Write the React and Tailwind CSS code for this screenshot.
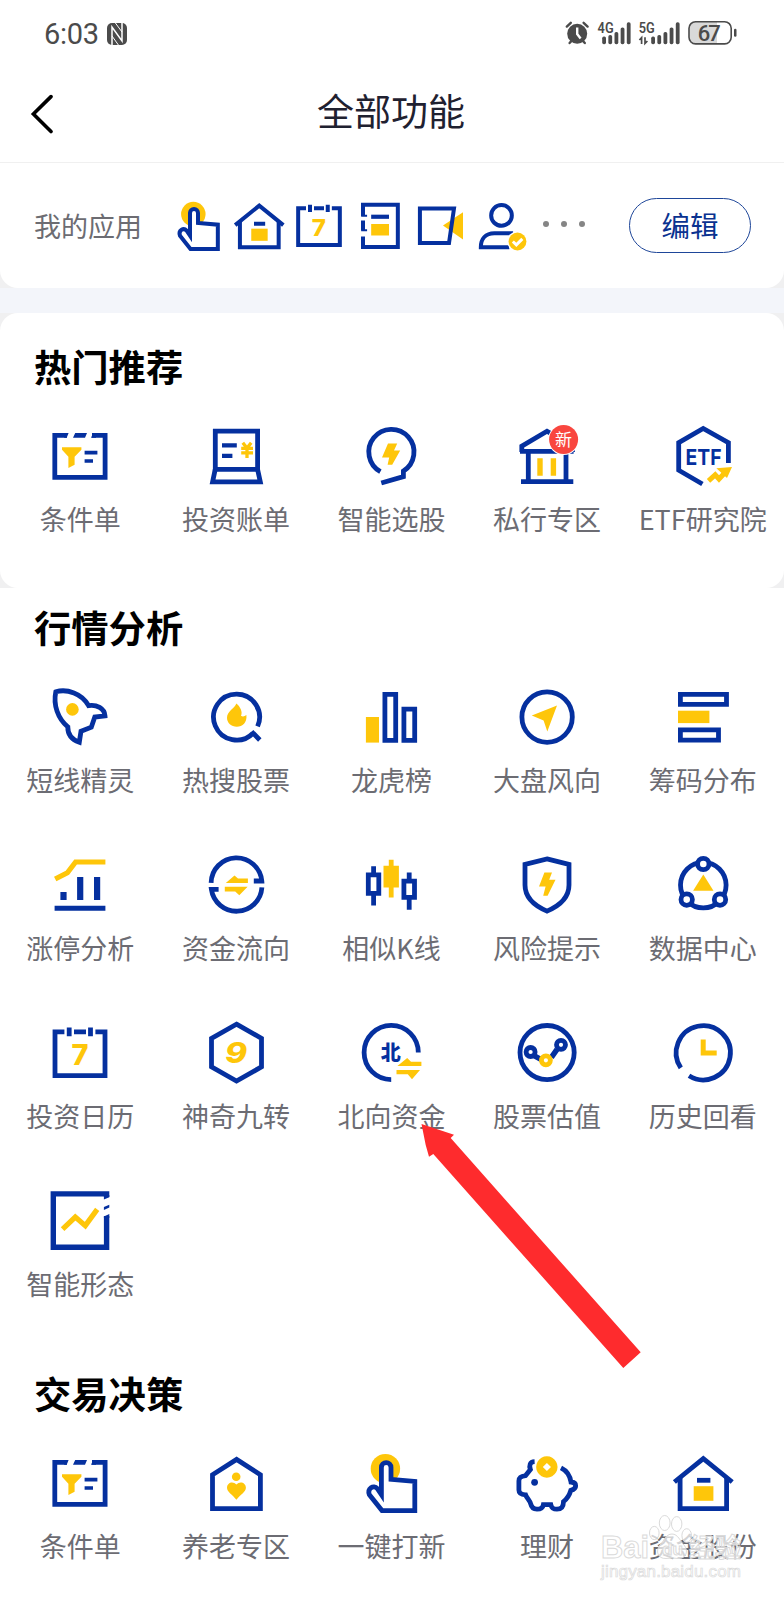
const BLUE = '#05309f';
const GOLD = '#fec60a';

/* ---------- ícones: todos em uma área de 72x72 ---------- */

function Icon({ small, children }) {
  return (
    <svg
      viewBox="0 0 72 72"
      className={small ? 'block h-[60px] w-[60px]' : 'block h-[72px] w-[72px]'}
      fill="none"
      stroke={BLUE}
      strokeWidth="4.8"
    >
      {children}
    </svg>
  );
}

const Gold = ({ d }) => <path d={d} fill={GOLD} stroke="none" />;
const Blue = ({ d }) => <path d={d} fill={BLUE} stroke="none" />;

const icons = {
  condition: (
    <>
      <path d="M23 15.4H10.8V57.4H61.1V15.4H48" />
      <Blue d="M22 13H24.6L22.7 17.8H20ZM31.2 13H43L41 17.8H29ZM49.2 13H52V17.8H47Z" />
      <Gold d="M18 27.2H37.4V29.8L30.6 36.8V44.8L24.4 47.9V36.8L18 29.8Z" />
      <path d="M40.6 32.6H53.4M40.6 41H49" strokeWidth="3.7" />
    </>
  ),
  bill: (
    <>
      <path d="M15.3 49.4V11.2H57.6V49.4Z" />
      <path d="M15.2 49.4L12.6 61.8H60.3L57.6 49.4" />
      <path d="M22 25.4H36.8M22 35.8H32.4" strokeWidth="4.3" />
      <path d="M42.8 22.8L47 28L51.2 22.8M41.2 28.4H53M41.2 32.8H53M47 28V38" stroke={GOLD} strokeWidth="3.3" />
    </>
  ),
  smartPick: (
    <>
      <path d="M25.4 51.7A22.6 22.6 0 1 1 48.4 51.1V56.6L26.3 63" />
      <Gold d="M33 23.4H42.2L39 30.4H45.2L37.2 44.8H32.6L34.2 37.4H27Z" />
    </>
  ),
  bank: (
    <>
      <path d="M9 31.4H62.6M10.8 32V26.2L36 11.2L61.5 26.2V32" />
      <path d="M17.3 31V61.7M55 31V61.7M10 61.7H62.3" />
      <path d="M29 38.3V55.7M42.4 38.3V55.7" stroke={GOLD} strokeWidth="5.4" />
      <circle cx="52.6" cy="19.6" r="15.4" fill="#fff" stroke="none" />
      <circle cx="52.6" cy="19.6" r="14.5" fill="#f9463f" stroke="none" />
      <text
        x="52.6"
        y="26"
        textAnchor="middle"
        fontSize="17"
        fill="#fff"
        stroke="none"
        className="font-['Noto_Sans_CJK_SC',sans-serif]"
      >
        新
      </text>
    </>
  ),
  etf: (
    <>
      <path d="M61.4 43V22.6L36.2 8.4L11.7 22.6V50.2L35.4 64" />
      <text
        x="18.6"
        y="44.6"
        fontSize="22"
        textLength="36"
        lengthAdjust="spacingAndGlyphs"
        fill={BLUE}
        stroke="none"
        className="font-['Inter',sans-serif] font-bold"
      >
        ETF
      </text>
      <path d="M41.5 60.8L48.2 54.8L52 59L59.5 51" stroke={GOLD} strokeWidth="5" />
      <Gold d="M49.4 48.2L65 47L60 58Z" />
    </>
  ),
  rocket: (
    <>
      <path d="M11.8 10.8C23 7.5 38 12.5 44.6 24.6C52.5 23.2 60.5 27.5 61 34.8L50.8 36L47.3 46.2L37 50.2L35.3 61.2C27.5 58.5 23.6 53.5 23.8 45.8C14 38 9 24 11.8 10.8Z" />
      <circle cx="28.4" cy="28.4" r="6.3" fill={GOLD} stroke="none" />
    </>
  ),
  hotSearch: (
    <>
      <path d="M57.6 45.4A23 23 0 1 0 53 52.2M51.6 50.6L59.8 59" />
      <Gold d="M36.4 22.6C34.5 27.5 27 30.5 27 36.8C27 42 31.4 45.8 36.8 45.8C42.6 45.8 47.2 41.5 46.4 34C44.5 35.6 42.6 36 41 34.8C43 31 40 25.5 36.4 22.6Z" />
    </>
  ),
  ranking: (
    <>
      <Gold d="M10.9 36H24V61.6H10.9Z" />
      <path d="M29.9 13.4H40.7V59.3H29.9ZM48.9 28.1H59.7V59.3H48.9Z" />
    </>
  ),
  compass: (
    <>
      <circle cx="36.1" cy="36.1" r="25.2" />
      <Gold d="M20.8 34.6L46 24.6L36.3 50.6L32.6 39.6Z" />
    </>
  ),
  chips: (
    <>
      <path d="M13.4 13.4H59.5V23.4H13.4ZM13.4 48.8H51.5V59.2H13.4Z" />
      <Gold d="M11 29.7H42.4V42.1H11Z" />
    </>
  ),
  limitUp: (
    <>
      <path d="M10.6 59.2H61.4" strokeWidth="5" />
      <path d="M19.5 43V51M36.2 28V51M53.1 28V51" strokeWidth="6.2" />
      <path d="M11.2 30L23.4 23.8L31.6 13H61.4" stroke={GOLD} strokeWidth="5.2" />
    </>
  ),
  flow: (
    <>
      <path d="M11.1 33.9A25.4 25.4 0 0 1 61.8 32H53.8" />
      <path d="M61.9 38.4A25.4 25.4 0 0 1 11.4 40.4H18.6" />
      <Gold d="M25.8 34L34.5 26.4L38 29.5H47.9V34ZM24.8 37.7H47.6L39.3 46.2L35.2 42.4H24.8Z" />
    </>
  ),
  candles: (
    <>
      <path d="M13.3 25.8H23.8V44.3H13.3ZM18.6 17.3V25M18.6 45V56.5" />
      <path d="M48.9 32.1H59.5V48.3H48.9ZM54.2 23.4V31M54.2 49V60.8" />
      <Gold d="M28.5 16.7H33.8V10.7H38.6V16.7H43.9V38.4H38.6V48.4H33.8V38.4H28.5Z" />
    </>
  ),
  shield: (
    <>
      <path d="M36 9.9L58 15.4V36C58 49 48 57 36 62.1C24 57 14 49 14 36V15.4Z" />
      <Gold d="M33.4 23.4H41L38.2 30.7H44.5L36.6 46.7H32.2L34.6 37.6H28Z" />
    </>
  ),
  dataCenter: (
    <>
      <circle cx="36.3" cy="36.1" r="22.8" />
      <g fill="#fff">
        <circle cx="36.3" cy="15" r="5.7" />
        <circle cx="19.7" cy="50.6" r="5.7" />
        <circle cx="53" cy="50.6" r="5.7" />
      </g>
      <Gold d="M36.3 25.6L46.5 41.8H26.1Z" />
    </>
  ),
  calendar: (
    <>
      <path d="M20.4 14.8H11V58.7H61V14.8H51.4M30 14.8H42M25.2 10.4V19.3M46.5 10.4V19.3" />
      <text
        x="27.4"
        y="48"
        fontSize="28"
        textLength="17"
        lengthAdjust="spacingAndGlyphs"
        fill={GOLD}
        stroke="none"
        className="font-['Inter',sans-serif] font-extrabold"
      >
        7
      </text>
    </>
  ),
  nine: (
    <>
      <path d="M36.5 7.2L61.5 21.3V49.9L36.5 64L11.5 49.9V21.3Z" />
      <text
        x="25"
        y="45.6"
        fontSize="28.5"
        textLength="22"
        lengthAdjust="spacingAndGlyphs"
        fill={GOLD}
        stroke="none"
        className="font-['Inter',sans-serif] font-extrabold italic"
      >
        9
      </text>
    </>
  ),
  north: (
    <>
      <path d="M36.2 62.6A27.1 27.1 0 1 1 63.3 35.6" />
      <text
        x="35.8"
        y="42.8"
        textAnchor="middle"
        fontSize="20"
        fill={BLUE}
        stroke="none"
        className="font-['Noto_Sans_CJK_SC',sans-serif] font-black"
      >
        北
      </text>
      <Gold d="M42.4 49L52.2 41L56 44.7H66.4V49ZM41.5 53H65L57 62.2L52.8 57.3H41.5Z" />
    </>
  ),
  valuation: (
    <>
      <circle cx="36.1" cy="35.6" r="27.1" />
      <path d="M23.5 38.8L30 42.5M40.4 40.4L46 32.4" strokeWidth="5.4" />
      <circle cx="19.6" cy="35" r="4.5" fill="#fff" />
      <circle cx="50" cy="27.8" r="4.5" fill="#fff" />
      <circle cx="34.9" cy="43.3" r="4.5" fill="#fff" stroke={GOLD} />
    </>
  ),
  history: (
    <>
      <path d="M13.8 50.9A27.1 27.1 0 1 1 22 58.8" />
      <path d="M36.2 22.4V36.1H49.7" stroke={GOLD} strokeWidth="5" />
    </>
  ),
  pattern: (
    <>
      <path d="M62.6 12V8.9H9.3V62.3H62.6V31" strokeWidth="5.4" />
      <Blue d="M59.9 10H65.3V12.2L59.9 14.6ZM59.9 22L65.3 19.8V22.6L59.9 24.9ZM59.9 31.4L65.3 29V33H59.9Z" />
      <path d="M18.6 44.2L31.3 32L41.3 40.6L53.2 24.4" stroke={GOLD} strokeWidth="5.2" />
    </>
  ),
  pension: (
    <>
      <path d="M12.5 61.6V27.8L36.6 12.4L60.4 27.8V61.6Z" />
      <circle cx="36.2" cy="29.8" r="4.3" fill={GOLD} stroke="none" />
      <Gold d="M36.4 37.6C33 33.6 27 35.6 27 40.8C27 45 32.5 47.6 36.4 52.8C40.3 47.6 45.9 45 45.9 40.8C45.9 35.6 39.8 33.6 36.4 37.6Z" />
    </>
  ),
  tap: (
    <>
      <circle cx="30.4" cy="21.7" r="14.7" fill={GOLD} stroke="none" />
      <path
        d="M26.4 47.6V20.4A4.8 4.8 0 0 1 36 20.4V32.4L59.8 34.4V63.6H27L14.4 47.8C12 41.5 18.5 37.4 22.4 41.6Z"
        fill="#fff"
      />
    </>
  ),
  piggy: (
    <>
      <path d="M23.6 14.6C18.8 14.8 18 18.5 19.4 22.6L14.6 28.6C9.5 29.4 7.9 30.5 7.9 34V43C7.9 46.4 10.5 47.6 14.6 47.8C15.8 51 18.8 53.4 19.6 56.6C20.4 60.5 22.5 62.2 26 62.2C30 62.2 31.8 61 32.4 57.6H39.8C40.6 61 42 62.2 46 62.2C50.5 62.2 52.4 60 52.5 54.6C56.5 51.5 58.5 48 59.8 43.4C66.5 41.5 66 35.5 60 35C59 28.5 55.5 23.5 50 20.8" />
      <circle cx="23.6" cy="35.3" r="3.4" fill={BLUE} stroke="none" />
      <Gold d="M35.9 9.3A10.7 10.7 0 1 1 35.8 9.3ZM35.9 15.9L31.8 20L35.9 24.1L40 20Z" />
    </>
  ),
  house: (
    <>
      <path d="M7.4 35L36.3 11.6L65.2 35" />
      <path d="M13.1 31V61.6H59.6V31" />
      <path d="M30 33.3H43.4" />
      <Gold d="M26.7 39.2H46.4V53.8H26.7Z" />
    </>
  ),
  notebook: (
    <>
      <path d="M15.6 24V10.4H57.4V61.3H15.6V48.5M15.6 29.5V41" />
      <path d="M13.4 23.6H20.5M13.4 41H20.5" strokeWidth="2.4" />
      <path d="M25.4 24.9H46.8" strokeWidth="5" />
      <Gold d="M25.4 33.6H46.8V47.4H25.4Z" />
    </>
  ),
  camera: (
    <>
      <Gold d="M39.6 35.4L63.6 19.6V52.2Z" />
      <path d="M11.9 14.9H52.8L46.8 56.5H11.9Z" />
    </>
  ),
  account: (
    <>
      <circle cx="36.6" cy="23.3" r="12.4" />
      <path d="M50.5 44.7H28C17.5 44.7 11.8 51.5 11.8 61.4H46" />
      <circle cx="55.8" cy="54.6" r="12.4" fill="#fff" stroke="none" />
      <circle cx="55.8" cy="54.6" r="10.7" fill={GOLD} stroke="none" />
      <path d="M50.2 54.6L54.4 58.6L61.6 51.4" stroke="#fff" strokeWidth="3.6" />
    </>
  ),
};

/* ---------- dados ---------- */

const myApps = ['tap', 'house', 'calendar', 'notebook', 'camera', 'account'];

const hotItems = [
  ['condition', '条件单'],
  ['bill', '投资账单'],
  ['smartPick', '智能选股'],
  ['bank', '私行专区'],
  ['etf', 'ETF研究院'],
];

const marketItems = [
  ['rocket', '短线精灵'],
  ['hotSearch', '热搜股票'],
  ['ranking', '龙虎榜'],
  ['compass', '大盘风向'],
  ['chips', '筹码分布'],
  ['limitUp', '涨停分析'],
  ['flow', '资金流向'],
  ['candles', '相似K线'],
  ['shield', '风险提示'],
  ['dataCenter', '数据中心'],
  ['calendar', '投资日历'],
  ['nine', '神奇九转'],
  ['north', '北向资金'],
  ['valuation', '股票估值'],
  ['history', '历史回看'],
  ['pattern', '智能形态'],
];

const tradeItems = [
  ['condition', '条件单'],
  ['pension', '养老专区'],
  ['tap', '一键打新'],
  ['piggy', '理财'],
  ['house', '资金股份'],
];

function StatusBar() {
  const tops = [36.6, 35, 32, 27.4, 22.2];
  return (
    <div className="flex h-[61px] items-start justify-between pt-[14px] pr-[46px] pl-[44px] text-[#4b4b4b]">
      <div className="flex items-center">
        <span className="w-[63px] pt-[2px] font-['Roboto',sans-serif] text-[29px] leading-[37px] tracking-[-0.3px]">
          6:03
        </span>
        <svg viewBox="0 0 20 22" className="h-[22px] w-[20px]">
          <rect x="0" y="0" width="20" height="22" rx="5" fill="currentColor" />
          <path d="M5 22V4L15 18V0" fill="none" stroke="#fff" strokeWidth="1.5" />
          <path d="M8.4 0L15 9M5 13L11.4 22" stroke="#fff" strokeWidth="1" />
        </svg>
      </div>
      <svg viewBox="565 14 173 39" className="h-[39px] w-[173px]" fill="currentColor">
        <circle cx="577.2" cy="33.8" r="10" />
        <path
          d="M566.8 26.6L570.8 22.8M587.6 26.6L583.6 22.8M569.6 43L572 40.4M584.8 43L582.4 40.4"
          stroke="currentColor"
          strokeWidth="2.4"
          strokeLinecap="round"
        />
        <path d="M577.2 27.5V34L580.6 38.4" fill="none" stroke="#fff" strokeWidth="2.4" />
        <g className="font-['Roboto',sans-serif] font-semibold" fontSize="14.5">
          <text x="597.6" y="33" textLength="16" lengthAdjust="spacingAndGlyphs">4G</text>
          <text x="638.8" y="33" textLength="16" lengthAdjust="spacingAndGlyphs">5G</text>
        </g>
        {tops.map((top, i) => (
          <g key={top}>
            <rect x={602.2 + i * 6.15} y={top} width="3.8" height={44.2 - top} rx="1.7" />
            <rect x={651.2 + i * 6.15} y={top} width="3.8" height={44.2 - top} rx="1.7" />
          </g>
        ))}
        <path
          d="M639.4 40L641.6 37.6V44M645 37.2V43.4L647.4 41"
          fill="none"
          stroke="currentColor"
          strokeWidth="1.7"
        />
        <path d="M695.5 22H717V43.6H695.5A6.4 6.4 0 0 1 689 37V28.6A6.4 6.4 0 0 1 695.5 22Z" fill="#d9d9d9" />
        <rect x="689" y="21.7" width="42.2" height="22.2" rx="6.6" fill="none" stroke="currentColor" strokeWidth="1.6" />
        <rect x="734" y="28.8" width="2.5" height="8" rx="1.2" />
        <text
          x="709.2"
          y="40.6"
          textAnchor="middle"
          fontSize="22"
          textLength="23"
          className="font-['Roboto',sans-serif] font-medium"
        >
          67
        </text>
      </svg>
    </div>
  );
}

function NavBar() {
  return (
    <div className="grid h-[102px] grid-cols-[100px_1fr_100px] items-center border-b border-[#f0f0f0]">
      <svg viewBox="0 0 24 40" className="mt-1 ml-[30px] h-[40px] w-[24px]" fill="none" stroke="#000" strokeWidth="3.6">
        <path d="M21 2.6L3.4 20L21 37.6" strokeLinecap="round" />
      </svg>
      <h1 className="mr-[2px] mb-[3px] text-center text-[37px] leading-[54px] text-[#1f2130]">全部功能</h1>
    </div>
  );
}

function MyApps() {
  return (
    <div className="bg-[#f0f0f1]">
      <div className="flex h-[125px] items-center rounded-b-[18px] bg-white pl-[34px]">
        <span className="w-[134px] text-[27px] leading-[40px] text-[#6c6c72]">我的应用</span>
        <div className="flex gap-[0.5px]">
          {myApps.map((name) => (
            <Icon key={name} small>
              {icons[name]}
            </Icon>
          ))}
        </div>
        <div className="mb-[4px] ml-[12px] flex w-[86.5px] gap-[12px]">
          <i className="h-[6px] w-[6px] rounded-full bg-[#858585]" />
          <i className="h-[6px] w-[6px] rounded-full bg-[#858585]" />
          <i className="h-[6px] w-[6px] rounded-full bg-[#858585]" />
        </div>
        <button className="h-[55px] w-[122px] rounded-full border border-[#1e4699] pb-[2px] text-[28.5px] leading-[40px] text-[#0a3290]">
          编辑
        </button>
      </div>
    </div>
  );
}

function Section({ title, items }) {
  return (
    <>
      <h2 className="pl-[34px] text-[37.3px] leading-[56px] font-bold text-black">{title}</h2>
      <div className="mt-[26px] grid grid-cols-5 gap-y-[48px] pr-[3.5px] pl-[2.5px]">
        {items.map(([icon, label]) => (
          <div key={label} className="flex h-[120px] flex-col items-center">
            <Icon>{icons[icon]}</Icon>
            <span className="mt-[7px] text-[27px] leading-[40px] whitespace-nowrap text-[#6c6c73]">{label}</span>
          </div>
        ))}
      </div>
    </>
  );
}

function Pointer() {
  return (
    <svg viewBox="0 0 222 246" className="absolute top-[1123px] left-[420px] h-[246px] w-[222px]">
      <path d="M1.5 1L34 11.7L30.7 15L220.7 229.3L203.3 245L13.3 31L9 33.7L5.7 22Z" fill="#fe2b2d" />
    </svg>
  );
}

function Watermark() {
  return (
    <svg
      viewBox="0 0 150 76"
      className="absolute top-[1510px] left-[598px] h-[76px] w-[150px]"
      fill="#fff"
      fillOpacity="0.7"
      stroke="#dadada"
      strokeWidth="1"
    >
      <ellipse cx="66.7" cy="13" rx="5.4" ry="7.5" />
      <ellipse cx="78.7" cy="14" rx="5.2" ry="7.4" />
      <ellipse cx="56.3" cy="23" rx="4.8" ry="6.6" />
      <ellipse cx="88.7" cy="25.5" rx="4.8" ry="6.8" />
      <path d="M74 24C80 24 82 31 86 35C91 41 88 49 80 48.5C76 48 72 48 68 48.5C60 49 57 41 62 35C66 31 68 24 74 24Z" />
      <text x="3" y="48" fontSize="32" textLength="48" lengthAdjust="spacingAndGlyphs" className="font-['Liberation_Sans',sans-serif] font-bold">
        Bai
      </text>
      <text x="64" y="45" fontSize="17" className="font-['Liberation_Sans',sans-serif] font-bold">
        du
      </text>
      <text x="91" y="47" fontSize="26" className="font-['Noto_Sans_CJK_SC',sans-serif] font-bold">
        经验
      </text>
      <text x="3" y="67" fontSize="17" textLength="140" strokeWidth="0.7" className="font-['Liberation_Sans',sans-serif]">
        jingyan.baidu.com
      </text>
    </svg>
  );
}

function App() {
  return (
    <div className="relative h-[1600px] w-[784px] overflow-hidden bg-white font-['Noto_Sans_CJK_SC',sans-serif]">
      <StatusBar />
      <NavBar />
      <MyApps />
      <div className="h-[25px] bg-[#f3f5fa]" />
      <div className="bg-[#f0f0f1]">
        <section className="h-[275px] rounded-[18px] bg-white pt-[25px]">
          <Section title="热门推荐" items={hotItems} />
        </section>
      </div>
      <section className="h-[764px] pt-[11px]">
        <Section title="行情分析" items={marketItems} />
      </section>
      <section className="pt-[13px]">
        <Section title="交易决策" items={tradeItems} />
      </section>
      <Pointer />
      <Watermark />
    </div>
  );
}

export default App;
